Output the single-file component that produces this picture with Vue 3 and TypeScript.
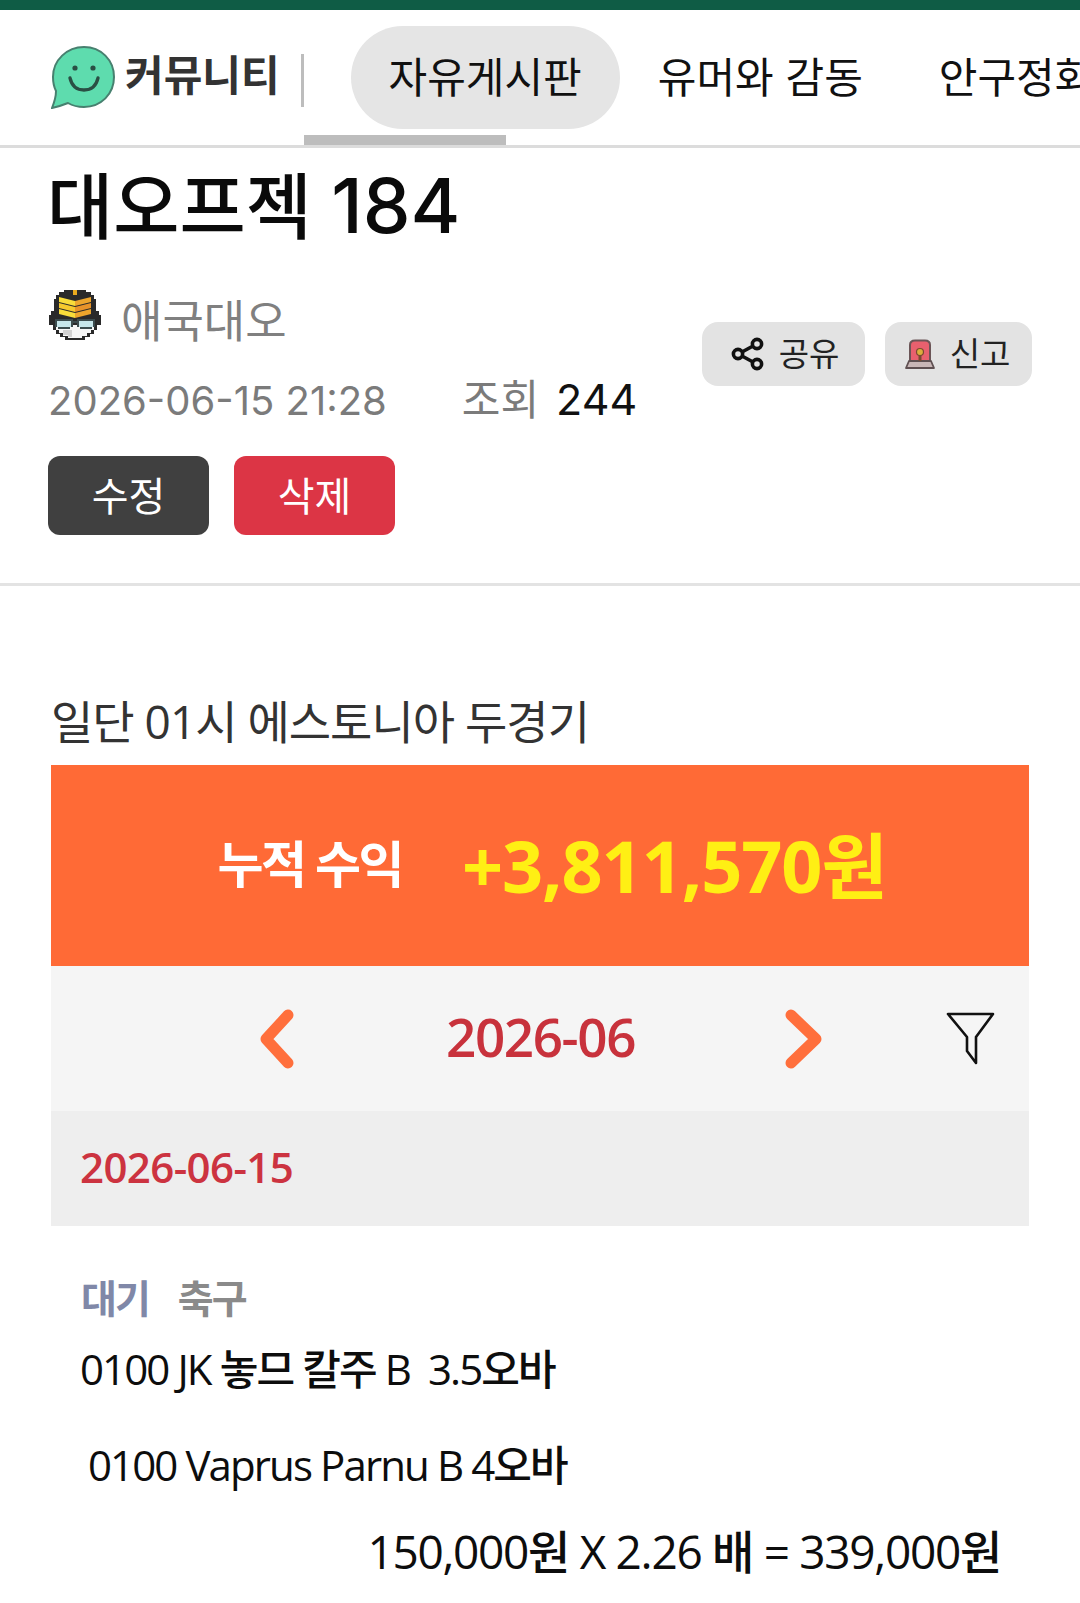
<script setup lang="ts">
interface TextLine {
  text: string
  indent: number
}

const tabs = ['자유게시판', '유머와 감동', '안구정화']

const lines: TextLine[] = [
  { text: '0100 JK 놓므 칼주 B  3.5오바', indent: 81 },
  { text: '0100 Vaprus Parnu B 4오바', indent: 89 },
]
</script>

<template>
  <div class="page">
    <div class="top-strip"></div>

    <header class="board-nav">
      <div class="brand">
        <svg class="brand-icon" viewBox="0 0 64 64" width="64" height="64">
          <path d="M33 2C50 2 63 15 63 32C63 49 50 62 33 62C27 62 22 61 17 58C12 60 6 62 1 63C3 58 5 52 5 46C3 42 2 37 2 32C2 15 16 2 33 2Z" fill="#5edcae" stroke="#47806f" stroke-width="2"/>
          <circle cx="24" cy="23" r="2.6" fill="#2a4f44"/>
          <circle cx="42" cy="23" r="2.6" fill="#2a4f44"/>
          <path d="M19 33C21 42 27 45 33 45C39 45 45 42 47 33" fill="none" stroke="#2a4f44" stroke-width="3.4" stroke-linecap="round"/>
        </svg>
        <span class="brand-name">커뮤니티</span>
      </div>
      <span class="nav-sep"></span>
      <nav class="tabs">
        <a v-for="(tab, i) in tabs" :key="tab" class="tab" :class="{ active: i === 0 }">{{ tab }}</a>
      </nav>
      <span class="scroll-thumb"></span>
    </header>

    <section class="post-head">
      <h1 class="post-title">대오프젝 <span class="title-num">184</span></h1>
      <div class="post-info">
        <div class="post-left">
          <div class="author">
            <svg class="avatar" viewBox="0 0 54 52" width="54" height="52">
              <path d="M16 1H38V3H43V6H46V10H48V22H51V26H53V36H49V41H46V45H42V48H37V51H17V48H12V45H8V41H5V36H1V26H3V22H6V10H8V6H11V3H16Z" fill="#2a2a2a"/>
              <path d="M8 36H46V41H43V44H39V47H34V49H20V47H15V44H11V41H8Z" fill="#f6f6f6"/>
              <path d="M15 41H24V48H20V46H15Z" fill="#d2d2d2"/>
              <path d="M25 1H29V6H25Z" fill="#e8a91e"/>
              <path d="M11 8L27 12V17L11 13Z" fill="#f8dc3a"/>
              <path d="M43 8L27 12V17L43 13Z" fill="#eda52c"/>
              <path d="M11 14L27 18V23L11 19Z" fill="#f6c92e"/>
              <path d="M43 14L27 18V23L43 19Z" fill="#e8932a"/>
              <path d="M11 20L27 24V29L11 25Z" fill="#f8dc3a"/>
              <path d="M43 20L27 24V29L43 25Z" fill="#eda52c"/>
              <path d="M7 30H25V32H29V30H47V38H44V40H32V38H29V34H25V38H22V40H10V38H7Z" fill="#3c4c4e"/>
              <path d="M9 32H23V38H9ZM31 32H45V38H31Z" fill="#c6e6ea"/>
            </svg>
            <span class="author-name">애국대오</span>
          </div>
          <div class="stats">
            <span class="post-date">2026-06-15 21:28</span>
            <span class="views-label">조회</span>
            <span class="views">244</span>
          </div>
          <div class="owner-actions">
            <button class="btn btn-edit">수정</button>
            <button class="btn btn-delete">삭제</button>
          </div>
        </div>
        <div class="post-actions">
          <button class="chip chip-share">
            <svg viewBox="0 0 34 34" width="34" height="34">
              <g fill="none" stroke="#111" stroke-width="3.6">
                <circle cx="26" cy="7" r="4.6"/>
                <circle cx="7" cy="17" r="4.6"/>
                <circle cx="26" cy="27" r="4.6"/>
                <path d="M11 15L22 9M11 19L22 25"/>
              </g>
            </svg>
            공유
          </button>
          <button class="chip chip-report">
            <svg viewBox="0 0 32 30" width="32" height="30">
              <path d="M6 6C6 3 8 1.500 11 1.500H21C24 1.500 26 3 26 6V23H6Z" fill="#e8606e" stroke="#6b5557" stroke-width="2"/>
              <path d="M2 29L5 22H27L30 29Z" fill="#c9b7b7" stroke="#5f5052" stroke-width="1.800" stroke-linejoin="round"/>
              <circle cx="16" cy="13" r="3.500" fill="#dcae3c" stroke="#7a4a30" stroke-width="1.200"/>
              <rect x="14.500" y="16" width="3" height="6" fill="#7a4a30"/>
            </svg>
            신고
          </button>
        </div>
      </div>
    </section>

    <article class="post-body">
      <p class="intro">일단 01시 에스토니아 두경기</p>

      <div class="profit">
        <span class="profit-label">누적 수익</span>
        <span class="profit-value">+3,811,570원</span>
      </div>

      <div class="month-bar">
        <svg class="chev chev-left" viewBox="0 0 36 60" width="36" height="60">
          <path d="M29 6L7 30L29 54" fill="none" stroke="#ff6f3c" stroke-width="11" stroke-linecap="round" stroke-linejoin="round"/>
        </svg>
        <span class="month">2026-06</span>
        <svg class="chev chev-right" viewBox="0 0 38 60" width="38" height="60">
          <path d="M7 6L32 30L7 54" fill="none" stroke="#ff6f3c" stroke-width="11" stroke-linecap="round" stroke-linejoin="round"/>
        </svg>
        <svg class="filter" viewBox="0 0 50 54" width="50" height="54">
          <path d="M2 3H47L30 26V52L21 40V26Z" fill="none" stroke="#111" stroke-width="2.600" stroke-linejoin="round"/>
        </svg>
      </div>

      <div class="day-bar">2026-06-15</div>

      <div class="pick">
        <div class="pick-tags">
          <span class="tag-status">대기</span>
          <span class="tag-sport">축구</span>
        </div>
        <p v-for="line in lines" :key="line.text" class="pick-line" :style="{ paddingLeft: line.indent - 51 + 'px' }">{{ line.text }}</p>
        <p class="pick-sum">150,000원 X 2.26 배 = 339,000원</p>
      </div>
    </article>
  </div>
</template>

<style scoped>
.page {
  width: 1080px;
  height: 1603px;
  overflow: hidden;
  background: #fff;
  color: #111;
  font-family: "Inter", "Noto Sans CJK KR", sans-serif;
}

.top-strip {
  height: 10px;
  background: #0f5c45;
}

.board-nav {
  position: relative;
  display: flex;
  align-items: center;
  height: 138px;
  padding-left: 51px;
  border-bottom: 3px solid #dcdcdc;
  box-sizing: border-box;
  white-space: nowrap;
  overflow: hidden;
}

.brand {
  flex: none;
  display: flex;
  align-items: center;
  gap: 10px;
  margin-top: -2px;
}

.brand-icon {
  display: block;
}

.brand-name {
  font-size: 42px;
  font-weight: 700;
  color: #333;
  margin-bottom: 8px;
}

.nav-sep {
  flex: none;
  width: 3px;
  height: 53px;
  margin: 6px 47px 0 21px;
  background: #bdbdbd;
}

.tabs {
  flex: none;
  display: flex;
  align-items: center;
  font-size: 42px;
  color: #111;
}

.tab {
  flex: none;
  padding: 18px 38px;
  line-height: 67px;
}

.tab.active {
  background: #e5e5e5;
  border-radius: 52px;
}

.scroll-thumb {
  position: absolute;
  left: 304px;
  bottom: -3px;
  width: 202px;
  height: 13px;
  background: #bdbdbd;
}

.post-head {
  padding: 0 49px;
  border-bottom: 3px solid #e3e3e3;
  height: 438px;
  box-sizing: border-box;
}

.post-title {
  margin: 0 0 0 -2px;
  padding-top: 12px;
  height: 90px;
  font-size: 72px;
  font-weight: 500;
  line-height: 90px;
  color: #0a0a0a;
}

.title-num {
  font-size: 76px;
}

.post-info {
  display: flex;
  justify-content: space-between;
  align-items: flex-start;
  margin-top: 39px;
}

.author {
  display: flex;
  align-items: center;
  gap: 19px;
  height: 52px;
  margin-left: -1px;
}

.avatar {
  display: block;
}

.author-name {
  font-size: 45px;
  line-height: 52px;
  color: #808080;
  margin-top: 14px;
}

.stats {
  display: flex;
  align-items: baseline;
  margin-top: 25px;
  margin-left: -1px;
  height: 50px;
}

.post-date {
  font-size: 40px;
  color: #7b7b7b;
  line-height: 50px;
}

.views-label {
  margin-left: 75px;
  font-size: 42px;
  color: #7b7b7b;
}

.views {
  margin-left: 17px;
  font-size: 43px;
  color: #111;
}

.owner-actions {
  display: flex;
  gap: 25px;
  margin-top: 40px;
  margin-left: -1px;
}

.btn {
  width: 161px;
  height: 79px;
  border: 0;
  border-radius: 12px;
  color: #fff;
  font-family: inherit;
  font-size: 40px;
  padding: 0 0 4px;
}

.btn-edit {
  background: #404040;
}

.btn-delete {
  background: #dc3545;
}

.post-actions {
  display: flex;
  gap: 20px;
  margin-top: 33px;
  margin-right: -1px;
}

.chip {
  display: flex;
  align-items: center;
  justify-content: center;
  gap: 14px;
  height: 64px;
  padding: 0 0 4px;
  border: 0;
  border-radius: 16px;
  background: #e3e3e3;
  color: #222;
  font-family: inherit;
  font-size: 33px;
}

.chip svg {
  margin-top: 4px;
}

.chip-share {
  width: 163px;
  padding-left: 3px;
}

.chip-report {
  width: 147px;
  padding-right: 3px;
}

.post-body {
  padding: 0 51px;
}

.intro {
  margin: 0;
  padding-top: 105px;
  height: 179px;
  box-sizing: border-box;
  font-family: "Open Sans", "Noto Sans CJK KR", sans-serif;
  font-size: 46px;
  line-height: 60px;
  letter-spacing: -1px;
  color: #333;
}

.profit {
  display: flex;
  align-items: center;
  justify-content: center;
  gap: 60px;
  height: 201px;
  padding: 0 0 8px 24px;
  box-sizing: border-box;
  background: #ff6a36;
  font-family: "Open Sans", "Noto Sans CJK KR", sans-serif;
}

.profit-label {
  font-size: 50px;
  font-weight: 700;
  color: #fff;
  letter-spacing: -2.5px;
}

.profit-value {
  font-size: 72px;
  font-weight: 700;
  color: #ffef14;
  letter-spacing: -1.1px;
}

.month-bar {
  position: relative;
  display: flex;
  align-items: center;
  height: 145px;
  background: #f5f5f5;
  font-family: "Open Sans", "Noto Sans CJK KR", sans-serif;
}

.chev {
  display: block;
  flex: none;
}

.chev-left {
  margin-left: 208px;
}

.month {
  margin-left: 151px;
  width: 190px;
  font-size: 53px;
  font-weight: 600;
  color: #c8323c;
  letter-spacing: -1.4px;
  white-space: nowrap;
  margin-bottom: 4px;
}

.chev-right {
  margin-left: 148px;
}

.filter {
  position: absolute;
  right: 33px;
  top: 45px;
}

.day-bar {
  height: 115px;
  padding-left: 29px;
  background: #eee;
  font-family: "Open Sans", "Noto Sans CJK KR", sans-serif;
  font-size: 42px;
  font-weight: 600;
  line-height: 111px;
  letter-spacing: -0.6px;
  color: #cc3340;
}

.pick {
  padding-top: 47px;
  font-family: "Open Sans", "Noto Sans CJK KR", sans-serif;
}

.pick-tags {
  display: flex;
  gap: 29px;
  padding-left: 30px;
  font-size: 39px;
  font-weight: 600;
  line-height: 50px;
  letter-spacing: -2px;
}

.tag-status {
  color: #8088a8;
}

.tag-sport {
  color: #8a8a8a;
}

.pick-line {
  margin: 21px 0 26px -1px;
  font-size: 42px;
  font-weight: 500;
  line-height: 50px;
  letter-spacing: -1.9px;
  white-space: pre;
  color: #0d0d0d;
}

.pick-line + .pick-line {
  margin-top: 46px;
}

.pick-sum {
  margin: 0;
  padding-top: 7px;
  text-align: right;
  padding-right: 28px;
  font-size: 46px;
  font-weight: 500;
  line-height: 56px;
  letter-spacing: -1.3px;
  color: #0d0d0d;
}
</style>

<style>
html,
body {
  background: #fff;
}
</style>
